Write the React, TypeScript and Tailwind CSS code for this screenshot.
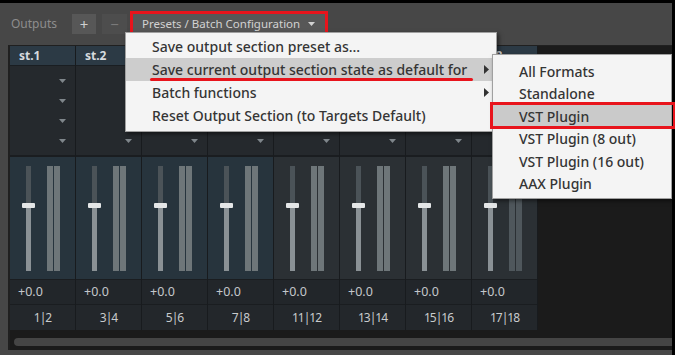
import React from "react";

const channels = [
  { name: "st.1", label: "1|2", teal: true },
  { name: "st.2", label: "3|4", teal: true },
  { name: "st.3", label: "5|6", teal: true },
  { name: "st.4", label: "7|8", teal: true },
  { name: "st.5", label: "11|12", teal: false },
  { name: "st.6", label: "13|14", teal: false },
  { name: "st.7", label: "15|16", teal: false },
  { name: "st.8", label: "17|18", teal: false, dim: true },
];

function Tri() {
  return (
    <svg width="7" height="4" viewBox="0 0 7 4" className="block">
      <path d="M0 0 L7 0 L3.5 4 Z" fill="#7f868b" />
    </svg>
  );
}

function Channel({ c }: { c: (typeof channels)[number] }) {
  return (
    <div className="w-[66px] flex flex-col border-r border-[#181b1e]">
      <div className="h-[20px] bg-[#2c3a45] pl-[9px] flex items-center text-[12px] font-bold text-[#d6dbdf] border-b border-[#1a1e22]">
        {c.name}
      </div>
      <div className="h-[89px] bg-[#25292d] flex flex-col items-end pr-[9px] pt-[13px] gap-[16px]">
        <Tri />
        <Tri />
        <Tri />
        <Tri />
      </div>
      <div className="h-[2px] bg-[#1a1d20]" />
      <div
        className={`h-[122px] flex pt-[9px] ${c.teal ? "bg-[#27343d]" : "bg-[#2b3034]"}`}
      >
        <div className="ml-[12px] w-[13px] flex flex-col items-center">
          <div className="w-[5px] h-[37px] bg-[#4b5358]" />
          <div className="w-[13px] h-[5px] bg-[#e4e6e7] rounded-[1px]" />
          <div className="w-[5px] h-[63px] bg-[#8a9195]" />
        </div>
        <div className="ml-[12px] flex gap-[1px]">
          <div className={`w-[6px] h-[105px] ${c.dim ? "bg-[#4f575c]" : "bg-[#6e7679]"}`} />
          <div className={`w-[6px] h-[105px] ${c.dim ? "bg-[#4f575c]" : "bg-[#6e7679]"}`} />
        </div>
      </div>
      <div className="h-[1px] bg-[#1a1d20]" />
      <div className="h-[25px] bg-[#22262a] pl-[8px] flex items-center text-[12.5px] text-[#c4c7ca] border-b border-[#1a1d20]">
        +0.0
      </div>
      <div className="h-[25px] bg-[#23272b] flex items-center justify-center text-[12px] tracking-[-1px] text-[#c8cbcd]">
        {c.label}
      </div>
    </div>
  );
}

export default function App() {
  return (
    <div className="w-[675px] h-[355px] bg-black overflow-hidden relative font-['Noto_Sans',sans-serif]">
      <div className="mt-[3px] w-[672px] h-[352px] bg-[#474747] flex flex-col">
        <div className="h-[42px] flex items-center pl-[11px]">
          <div className="w-[61px] text-[12px] text-[#8d8d8d]">Outputs</div>
          <div className="w-[24px] h-[20px] bg-[#575757] flex items-center justify-center text-[15px] text-[#cfcfcf] leading-none">
            +
          </div>
          <div className="ml-[6px] w-[25px] h-[20px] bg-[#4d4d4d] flex items-center justify-center text-[15px] text-[#7a7a7a] leading-none">
            −
          </div>
          <div className="ml-[3px] w-[198px] h-[27px] border-[3px] border-[#e8141c] bg-[#575757] flex items-center pl-[9px] text-[11.5px] text-[#d2d2d2]">
            <span>Presets / Batch Configuration</span>
            <svg width="7" height="4" viewBox="0 0 7 4" className="ml-[8px]">
              <path d="M0 0 L7 0 L3.5 4 Z" fill="#d2d2d2" />
            </svg>
          </div>
        </div>
        <div className="h-[305px] ml-[8px] bg-[#1b1b1b] border-l-2 border-t border-[#202020] flex flex-col">
          <div className="flex h-[284px]">
            {channels.map((c) => (
              <Channel key={c.name} c={c} />
            ))}
          </div>
          <div className="mt-[8px] ml-[4px] h-[8px] rounded-l-full bg-[#454545]" />
        </div>
      </div>

      {/* main menu */}
      <div className="absolute left-[125px] top-[32px] w-[372px] h-[100px] bg-[#f4f4f4] border border-[#a0a0a0] shadow-[2px_2px_4px_rgba(0,0,0,0.5)] pt-[2px] text-[14px] font-medium text-[#353535]">
        <div className="h-[23px] flex items-center pl-[26px]">Save output section preset as...</div>
        <div className="h-[23px] flex items-center pl-[26px] bg-[#cdcdcd] relative">
          <span>Save current output section state as default for</span>
          <svg width="5" height="9" viewBox="0 0 5 9" className="absolute left-[358px] top-[7px]">
            <path d="M0 0 L5 4.5 L0 9 Z" fill="#333" />
          </svg>
          <div className="absolute left-[24px] top-[20px] w-[323px] h-[3px] bg-[#e8141c] rounded-full" />
        </div>
        <div className="h-[23px] flex items-center pl-[26px] relative">
          <span>Batch functions</span>
          <svg width="5" height="9" viewBox="0 0 5 9" className="absolute left-[358px] top-[7px]">
            <path d="M0 0 L5 4.5 L0 9 Z" fill="#333" />
          </svg>
        </div>
        <div className="h-[23px] flex items-center pl-[26px]">Reset Output Section (to Targets Default)</div>
      </div>

      {/* submenu */}
      <div className="absolute left-[492px] top-[54px] w-[180px] h-[145px] bg-[#f4f4f4] border border-[#a0a0a0] shadow-[2px_2px_4px_rgba(0,0,0,0.5)] pt-[5px] text-[14px] font-medium text-[#353535]">
        <div className="h-[22.5px] flex items-center pl-[26px]">All Formats</div>
        <div className="h-[22.5px] flex items-center pl-[26px]">Standalone</div>
        <div className="h-[22.5px] flex items-center pl-[26px] bg-[#cacaca]">VST Plugin</div>
        <div className="h-[22.5px] flex items-center pl-[26px]">VST Plugin (8 out)</div>
        <div className="h-[22.5px] flex items-center pl-[26px]">VST Plugin (16 out)</div>
        <div className="h-[22.5px] flex items-center pl-[26px]">AAX Plugin</div>
      </div>
      <div className="absolute left-[490px] top-[102px] w-[186px] h-[27px] border-[3px] border-[#e8141c]" />
    </div>
  );
}
